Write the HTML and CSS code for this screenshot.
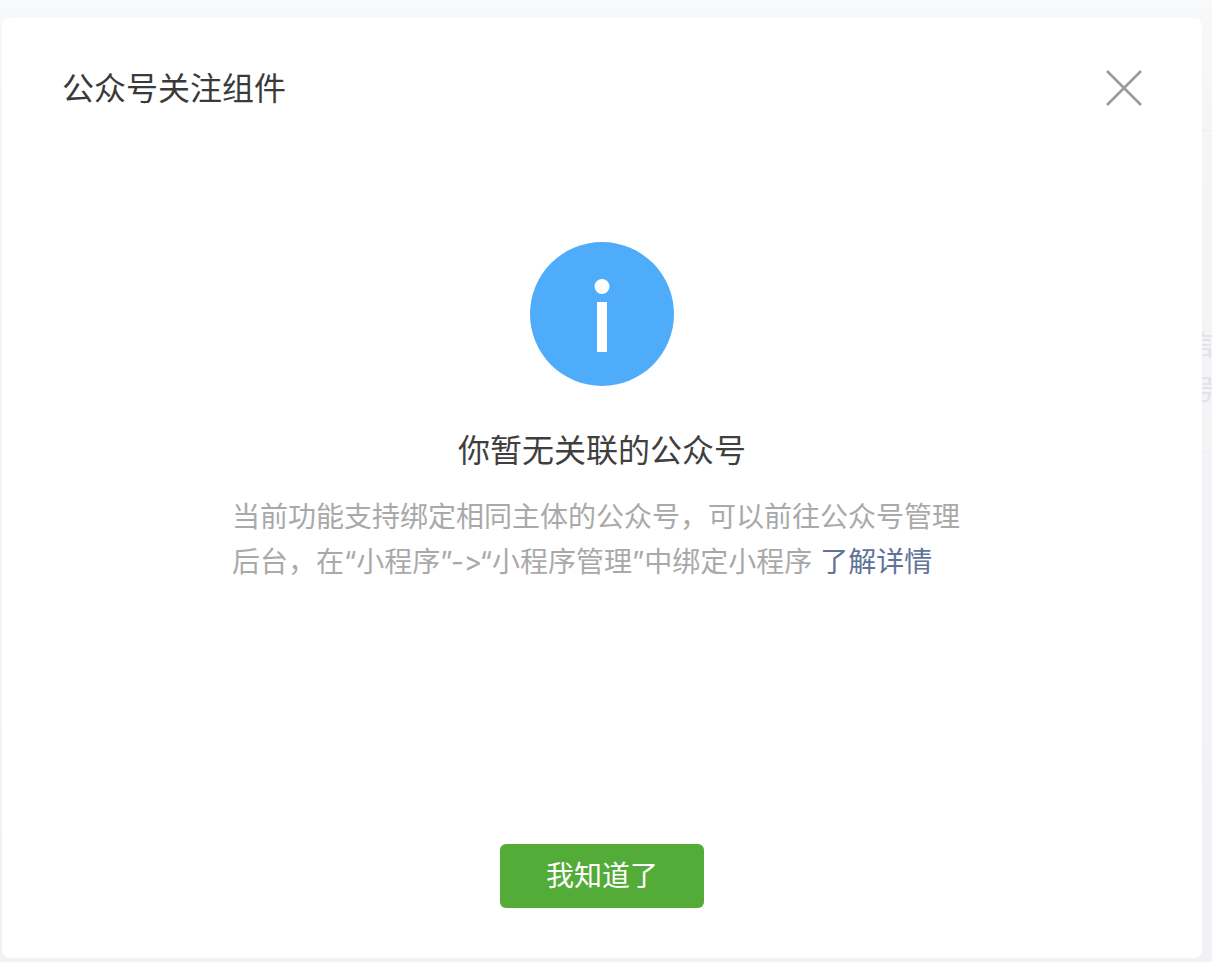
FILE: index.html
```html
<!DOCTYPE html>
<html lang="zh-CN">
<head>
<meta charset="utf-8">
<title>公众号关注组件</title>
<link rel="stylesheet" href="styles.css">
</head>
<body>
<div class="backdrop">
  <div class="bg-line bg-line-1"></div>
  <div class="bg-line bg-line-2"></div>
  <div class="bg-text bg-text-1">言</div>
  <div class="bg-text bg-text-2">号</div>
</div>
<main class="dialog">
  <header class="dialog-head">
    <h1 class="dialog-title">公众号关注组件</h1>
    <svg class="close" width="38" height="38" viewBox="0 0 38 38" aria-label="关闭"><path d="M2 2 L36 36 M36 2 L2 36" fill="none" stroke="#9a9a9a" stroke-width="2.6"/></svg>
  </header>
  <section class="dialog-body">
    <svg class="info" width="144" height="144" viewBox="0 0 144 144"><circle cx="72" cy="72" r="72" fill="#4eacfb"/><circle cx="72" cy="44.500" r="7.500" fill="#fff"/><rect x="67" y="60" width="10" height="50" fill="#fff"/></svg>
    <h2 class="msg-title">你暂无关联的公众号</h2>
    <p class="msg-desc">当前功能支持绑定相同主体的公众号，可以前往公众号管理后台，在“小程序”-&gt;“小程序管理”中绑定小程序 <a class="link">了解详情</a></p>
  </section>
  <footer class="dialog-foot"><button class="btn">我知道了</button></footer>
</main>
</body>
</html>
```
FILE: styles.css
```css
* { box-sizing: border-box; }
html, body { margin: 0; height: 100%; }
body {
  width: 1212px; height: 962px; overflow: hidden; position: relative;
  background: linear-gradient(#f8f9fa 0, #f4f5f7 130px, #f1f2f5 100%);
  padding: 18px 10px 4px 2px;
  font-family: "Noto Sans CJK SC", "Liberation Sans", sans-serif;
}
.backdrop { position: absolute; inset: 0; overflow: hidden; }
.bg-line { position: absolute; left: 1202px; width: 10px; height: 1px; background: #ebecee; }
.bg-line-1 { top: 130px; }
.bg-line-2 { top: 451px; }
.bg-text { position: absolute; left: 1188px; font-size: 28px; line-height: 32px; color: #e2e3e6; }
.bg-text-1 { top: 327px; }
.bg-text-2 { top: 372px; }
.dialog {
  position: relative; height: 940px; background: #fff; border-radius: 8px;
  display: flex; flex-direction: column;
}
.dialog-head { display: flex; justify-content: space-between; align-items: center; padding: 50px 59px 0 60px; height: 90px; }
.dialog-title { margin: -4px 0 0; font-size: 32px; font-weight: 400; color: #3a3a3a; line-height: 40px; }
.dialog-body { flex: 1; display: flex; flex-direction: column; align-items: center; padding-top: 134px; }
.msg-title { margin: 40px 0 0; font-size: 32px; font-weight: 400; line-height: 44px; color: #3f3f3f; }
.msg-desc { margin: 25px 0 0; width: 740px; font-family: Inter, "Noto Sans CJK SC", sans-serif; font-variant-ligatures: none; font-feature-settings: "calt" 0; font-size: 28px; line-height: 45px; color: #a9a9a9; }
.link { color: #607399; }
.dialog-foot { display: flex; justify-content: center; padding-bottom: 50px; }
.btn { width: 204px; height: 64px; padding: 0 0 4px; border: 0; border-radius: 6px; background: #53ab38; color: #fff; font: inherit; font-size: 28px; }
```
